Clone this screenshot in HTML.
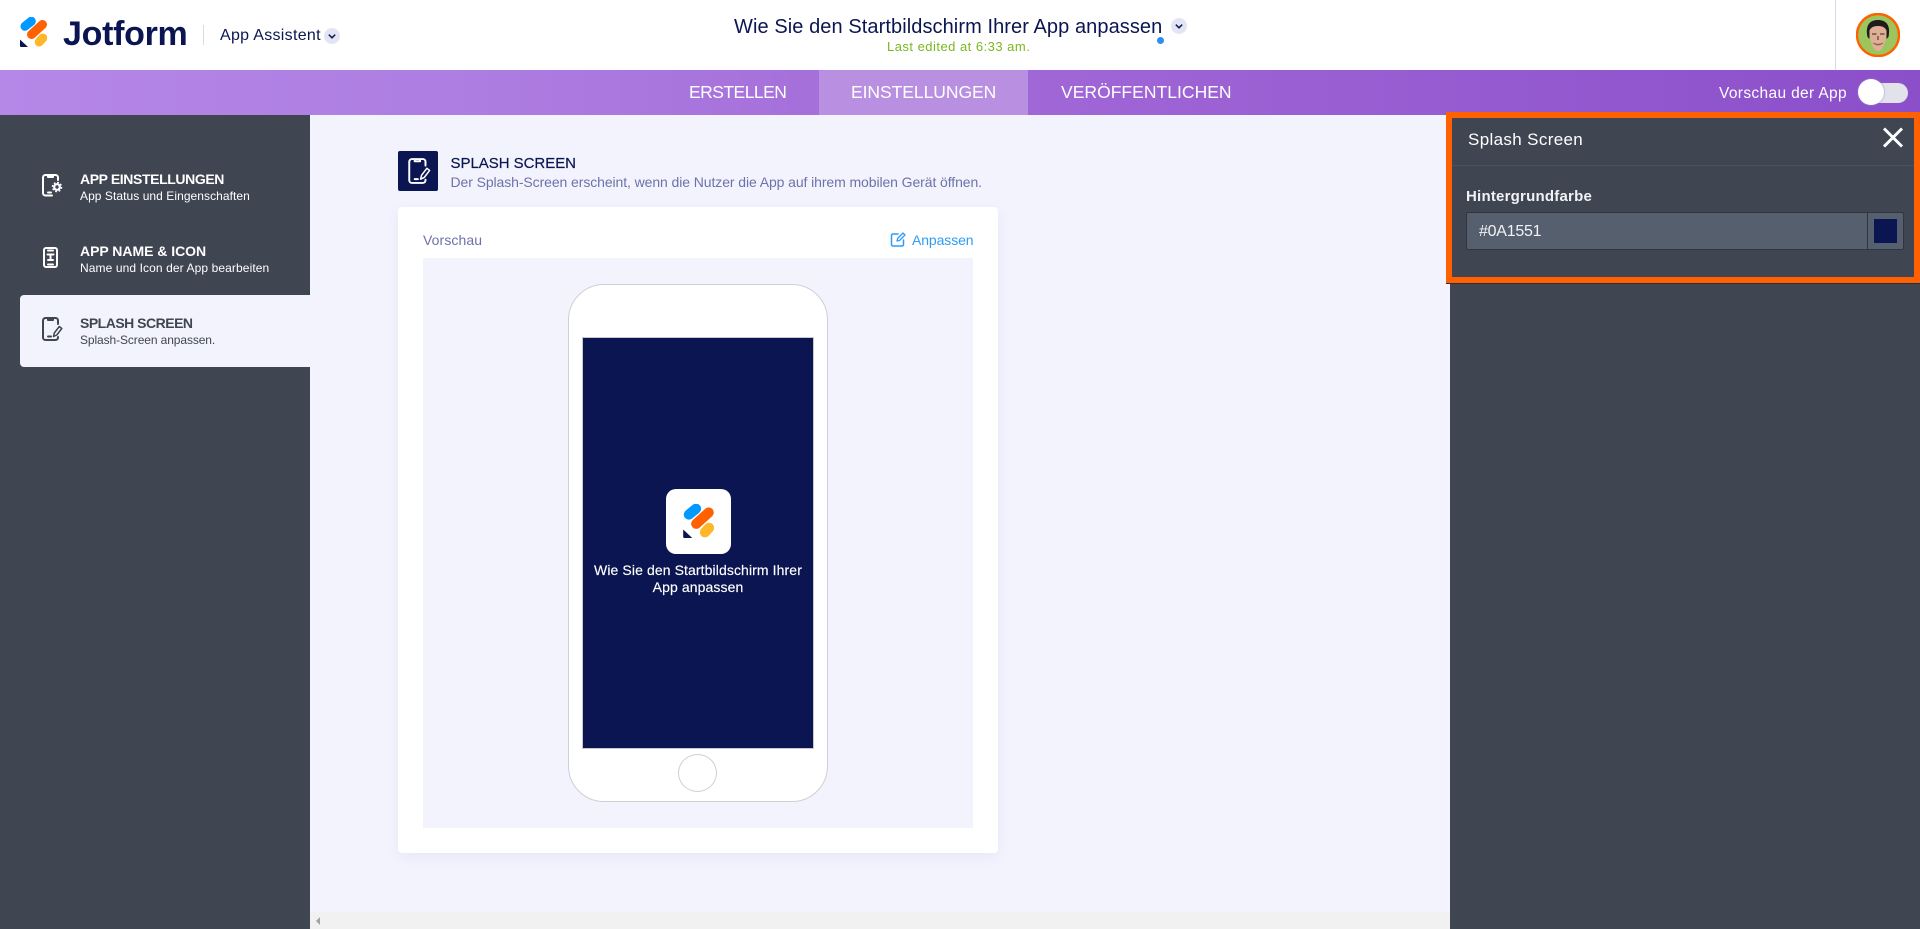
<!DOCTYPE html>
<html lang="de"><head><meta charset="utf-8"><title>Jotform App</title>
<style>
*{box-sizing:border-box}
html,body{margin:0;padding:0;width:1920px;height:929px;overflow:hidden;background:#f3f3fe;font-family:"Liberation Sans",sans-serif}
.t{position:absolute;white-space:nowrap;line-height:1}
.b{position:absolute}
svg{position:absolute;display:block}
</style></head><body>
<div class="b" style="left:0;top:0;width:1920px;height:70px;background:#fff"></div>
<svg style="left:20px;top:17px" width="27" height="30" viewBox="20 17 27 30"><g fill="none" stroke-linecap="round" stroke-width="9"><line x1="25" y1="26.300" x2="31.300" y2="21.200" stroke="#0099ff"/><line x1="31.500" y1="34.500" x2="42.500" y2="24.500" stroke="#ff6100"/><line x1="39.200" y1="42" x2="42.800" y2="38" stroke="#ffb629"/></g><path d="M20 39.500L28 47H21Q20 47 20 46Z" fill="#0a1551"/></svg>
<div class="t" style="left:63px;top:14px;font-size:34px;font-weight:700;color:#0a1551;letter-spacing:-.3px;line-height:40px">Jotform</div>
<div class="b" style="left:203px;top:25px;width:1px;height:20px;background:#d8dae9"></div>
<div class="t" style="left:220px;top:28px;font-size:16px;color:#0a1551;letter-spacing:.3px">App Assistent</div>
<svg style="left:324px;top:28px" width="16" height="16" viewBox="0 0 16 16"><circle cx="8" cy="8" r="8" fill="#e3e5f5"/><path d="M4.800 6.600L8 9.800l3.200-3.200" fill="none" stroke="#0a1551" stroke-width="1.500"/></svg>
<div class="t" style="left:734px;top:15.500px;font-size:20px;color:#0a1551;letter-spacing:.08px;line-height:22px">Wie Sie den Startbildschirm Ihrer App anpassen</div>
<svg style="left:1171px;top:18px" width="16" height="16" viewBox="0 0 16 16"><circle cx="8" cy="8" r="8" fill="#e3e5f5"/><path d="M4.800 6.600L8 9.800l3.200-3.200" fill="none" stroke="#0a1551" stroke-width="1.500"/></svg>
<div class="b" style="left:1157px;top:36.500px;width:7px;height:7px;border-radius:50%;background:#2b8ff0"></div>
<div class="t" style="left:887px;top:39.500px;font-size:13px;color:#7ab81e;letter-spacing:.48px">Last edited at 6:33 am.</div>
<div class="b" style="left:1835px;top:0;width:1px;height:70px;background:#d8dae9"></div>
<svg style="left:1856px;top:13px" width="44" height="44" viewBox="0 0 44 44"><circle cx="22" cy="22" r="21" fill="#9cc55e" stroke="#ff6100" stroke-width="2.400"/><path d="M11.500 24C9 12 14 7 22 7s13 5 10.500 17l-2 2V17H13.500v9z" fill="#1e1c1c"/><path d="M13.500 20C13 15 17 13 22 13s9 2 8.500 7c-.5 9-4 18-8.500 18S14 29 13.500 20z" fill="#dfb095"/><path d="M16 21h4.500M24 21h4.500M22 23v4" stroke="#5a3f33" stroke-width="1.200"/><path d="M17 30q5 2.500 10 0q-5 4-10 0z" fill="#fff" stroke="#8f5f4a" stroke-width=".7"/></svg>
<div class="b" style="left:0;top:70px;width:1920px;height:45px;background:linear-gradient(90deg,#b587e7 0%,#ad7de1 25%,#a066d6 55%,#8b4fca 100%)"></div>
<div class="b" style="left:819px;top:70px;width:209px;height:45px;background:#b98fe2"></div>
<div class="t" style="left:689px;top:83.500px;font-size:17.500px;color:#fff;letter-spacing:-.53px">ERSTELLEN</div>
<div class="t" style="left:851px;top:83.500px;font-size:17.500px;color:#fff;letter-spacing:-.05px">EINSTELLUNGEN</div>
<div class="t" style="left:1061px;top:83.500px;font-size:17.500px;color:#fff;letter-spacing:.03px">VERÖFFENTLICHEN</div>
<div class="t" style="left:1719px;top:86px;font-size:15.500px;color:#fff;letter-spacing:.35px">Vorschau der App</div>
<div class="b" style="left:1862px;top:83px;width:46px;height:20px;border-radius:10px;background:#e2e3ea"></div>
<div class="b" style="left:1858px;top:79px;width:26px;height:26px;border-radius:50%;background:#fff;box-shadow:0 0 2px #9a88c9"></div>
<div class="b" style="left:0;top:115px;width:310px;height:814px;background:#404552"></div>
<div class="b" style="left:20px;top:295px;width:290px;height:72px;background:#f3f3fe;border-radius:4px 0 0 4px"></div>
<svg style="left:41px;top:173px" width="22" height="24" viewBox="0 0 22 24" fill="none" stroke="#fff" stroke-width="2" stroke-linecap="round" stroke-linejoin="round"><path d="M11 22.500H4.500A2.500 2.500 0 0 1 2 20V4.500A2.500 2.500 0 0 1 4.500 2h10A2.500 2.500 0 0 1 17 4.500V7M7 2.500V4h5V2.500M7 19.500h3"/><circle cx="16" cy="14" r="2.800" stroke-width="2.200"/><circle cx="16" cy="14" r="4.500" stroke-dasharray="1.800 1.730" stroke-width="1.500" stroke-linecap="butt"/></svg>
<svg style="left:41px;top:245px" width="18" height="24" viewBox="0 0 18 24" fill="none" stroke="#fff" stroke-width="2" stroke-linecap="round" stroke-linejoin="round"><rect x="3" y="3" width="13" height="19" rx="2"/><path d="M7 5.500h5M7 19.500h5M6.500 9.500h6M9.500 9.500v5.500M7 15h5"/></svg>
<svg style="left:41px;top:317px" width="22" height="24" viewBox="0 0 22 24" fill="none" stroke="#404552" stroke-width="2" stroke-linecap="round" stroke-linejoin="round"><path d="M17 7V3.500A2.500 2.500 0 0 0 14.500 1h-10A2.500 2.500 0 0 0 2 3.500v17A2.500 2.500 0 0 0 4.500 23h10a2.500 2.500 0 0 0 2.500-2.500V20M7 1.500V3h5V1.500M7 19.500h3"/><path d="M12.500 19.500l.8-3.500 5-6.500 2.500 2-5 6.500z" stroke-width="1.500"/></svg>
<div class="t" style="left:80px;top:172px;font-size:14px;font-weight:700;color:#fff;letter-spacing:-.39px">APP EINSTELLUNGEN</div>
<div class="t" style="left:80px;top:190px;font-size:12px;color:#fff;letter-spacing:.06px">App Status und Eingenschaften</div>
<div class="t" style="left:80px;top:244px;font-size:14px;font-weight:700;color:#fff;letter-spacing:-.03px">APP NAME &amp; ICON</div>
<div class="t" style="left:80px;top:262px;font-size:12px;color:#fff;letter-spacing:.1px">Name und Icon der App bearbeiten</div>
<div class="t" style="left:80px;top:315.500px;font-size:14px;font-weight:700;color:#404552;letter-spacing:-.5px">SPLASH SCREEN</div>
<div class="t" style="left:80px;top:333.500px;font-size:12px;color:#404552;letter-spacing:-.1px">Splash-Screen anpassen.</div>
<div class="b" style="left:398px;top:151px;width:40px;height:40px;background:#0a1551;border-radius:2px"></div>
<svg style="left:407px;top:158px" width="24" height="26" viewBox="0 0 22 24" fill="none" stroke="#fff" stroke-width="1.800" stroke-linecap="round" stroke-linejoin="round"><path d="M17 7V3.500A2.500 2.500 0 0 0 14.500 1h-10A2.500 2.500 0 0 0 2 3.500v17A2.500 2.500 0 0 0 4.500 23h10a2.500 2.500 0 0 0 2.500-2.500V20M7 1.500V3h5V1.500M7 19.500h3"/><path d="M12.500 19.500l.8-3.500 5-6.500 2.500 2-5 6.500z" stroke-width="1.400"/></svg>
<div class="t" style="left:450.500px;top:156px;font-size:15px;color:#0a1551;letter-spacing:-.03px;-webkit-text-stroke:.2px #0a1551">SPLASH SCREEN</div>
<div class="t" style="left:450.500px;top:175px;font-size:14px;color:#6c73a8;letter-spacing:-.09px">Der Splash-Screen erscheint, wenn die Nutzer die App auf ihrem mobilen Gerät öffnen.</div>
<div class="b" style="left:398px;top:207px;width:600px;height:646px;background:#fff;border-radius:4px;box-shadow:0 4px 12px rgba(80,90,160,.07)"></div>
<div class="t" style="left:423px;top:233px;font-size:14px;color:#6c73a8;letter-spacing:.1px">Vorschau</div>
<svg style="left:890px;top:231px" width="16" height="16" viewBox="0 0 16 16" fill="none" stroke="#2f9bf7" stroke-width="1.500" stroke-linecap="round" stroke-linejoin="round"><path d="M8 3H3a1.500 1.500 0 0 0-1.500 1.500v9A1.500 1.500 0 0 0 3 15h9a1.500 1.500 0 0 0 1.500-1.500V9"/><path d="M7 10l.6-2.500L13 2l2 2-5.500 5.500z" stroke-width="1.300"/></svg>
<div class="t" style="left:912px;top:233px;font-size:14px;color:#2f9bf7;letter-spacing:-.1px">Anpassen</div>
<div class="b" style="left:423px;top:258px;width:550px;height:570px;background:#f3f3fe"></div>
<div class="b" style="left:568px;top:284px;width:260px;height:518px;background:#fff;border:1px solid #cfcfd4;border-radius:36px"></div>
<div class="b" style="left:582px;top:337px;width:232px;height:412px;background:#0a1551;border:1px solid #c8c8cd"></div>
<div class="b" style="left:678px;top:754px;width:39px;height:38px;border:1px solid #cfcfd4;border-radius:50%;background:#fff"></div>
<div class="b" style="left:666px;top:489px;width:65px;height:65px;background:#fff;border-radius:10px"></div>
<svg style="left:683px;top:504px" width="31" height="34" viewBox="20 17 27 30"><g fill="none" stroke-linecap="round" stroke-width="9"><line x1="25" y1="26.300" x2="31.300" y2="21.200" stroke="#0099ff"/><line x1="31.500" y1="34.500" x2="42.500" y2="24.500" stroke="#ff6100"/><line x1="39.200" y1="42" x2="42.800" y2="38" stroke="#ffb629"/></g><path d="M20 39.500L28 47H21Q20 47 20 46Z" fill="#0a1551"/></svg>
<div class="t" style="left:583px;width:230px;top:563px;font-size:14px;color:#fff;text-align:center;letter-spacing:.1px;-webkit-text-stroke:.15px #fff">Wie Sie den Startbildschirm Ihrer</div>
<div class="t" style="left:583px;width:230px;top:580px;font-size:14px;color:#fff;text-align:center;letter-spacing:.1px;-webkit-text-stroke:.15px #fff">App anpassen</div>
<div class="b" style="left:310px;top:912px;width:1140px;height:17px;background:#f1f1f1"></div>
<svg style="left:315px;top:917px" width="7" height="8" viewBox="0 0 7 8"><path d="M5 0v8L1 4z" fill="#a3a3a3"/></svg>
<div class="b" style="left:1450px;top:115px;width:470px;height:814px;background:#404552"></div>
<div class="b" style="left:1446px;top:112px;width:474px;height:171px;background:#404552;border:6px solid #ff6100;box-shadow:0 1px 0 #2c3038"></div>
<div class="b" style="left:1452px;top:165px;width:462px;height:1px;background:#4c515e"></div>
<div class="t" style="left:1468px;top:131px;font-size:17px;color:#fff;letter-spacing:.35px">Splash Screen</div>
<svg style="left:1882px;top:127px" width="22" height="21" viewBox="0 0 22 21"><path d="M2 1.500l18 18M20 1.500l-18 18" stroke="#fff" stroke-width="3" fill="none"/></svg>
<div class="t" style="left:1466px;top:189px;font-size:15px;font-weight:700;color:#f1f2f6;letter-spacing:.22px">Hintergrundfarbe</div>
<div class="b" style="left:1466px;top:212px;width:438px;height:38px;background:#565f6e;border:1px solid #31353f;border-radius:2px"></div>
<div class="b" style="left:1867px;top:212px;width:1px;height:38px;background:#31353f"></div>
<div class="b" style="left:1874px;top:219px;width:23px;height:24px;background:#0a1551"></div>
<div class="t" style="left:1479px;top:224px;font-size:16px;color:#f1f2f6;letter-spacing:-.25px">#0A1551</div>
</body></html>
